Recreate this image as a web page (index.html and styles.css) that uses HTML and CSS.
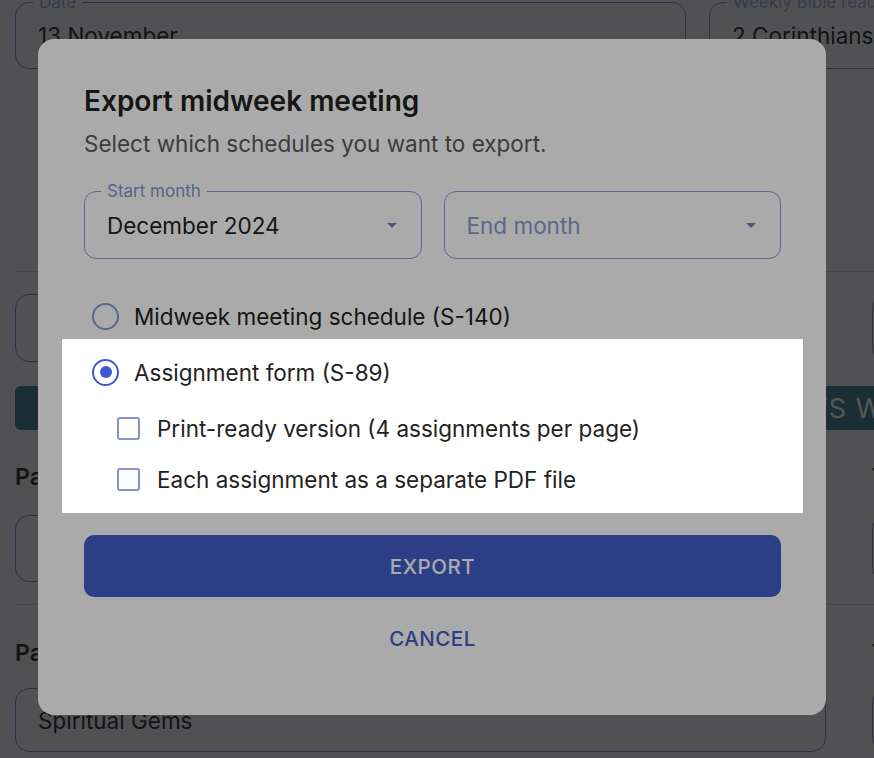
FILE: index.html
```html
<!DOCTYPE html>
<html lang="en">
<head>
<meta charset="utf-8">
<title>Export midweek meeting</title>
<link rel="stylesheet" href="styles.css">
</head>
<body>
<div class="page">
  <div class="row row-top">
    <div class="field"><span class="field-label">Date</span><span class="field-value">13 November</span></div>
    <div class="field"><span class="field-label">Weekly Bible reading</span><span class="field-value">2 Corinthians 10-13</span></div>
  </div>
  <hr class="divider divider-1">
  <div class="row row-wide row-2">
    <div class="field"></div>
    <div class="field"></div>
  </div>
  <div class="section-bar"><span class="section-title">TREASURES FROM GOD’S WORD</span></div>
  <div class="row row-wide heading-row">
    <h3 class="part">Part 1</h3>
    <h3 class="part">Time</h3>
  </div>
  <div class="row row-wide row-3">
    <div class="field"></div>
    <div class="field"></div>
  </div>
  <hr class="divider divider-2">
  <div class="row row-wide heading-row heading-row-2">
    <h3 class="part">Part 2</h3>
    <h3 class="part">Time</h3>
  </div>
  <div class="row row-wide row-4">
    <div class="field field-short"><span class="field-value">Spiritual Gems</span></div>
    <div class="field field-short"></div>
  </div>
</div>

<div class="backdrop"></div>

<div class="dialog" role="dialog">
  <h2 class="dialog-title">Export midweek meeting</h2>
  <p class="dialog-sub">Select which schedules you want to export.</p>

  <div class="selects">
    <div class="select">
      <span class="select-label">Start month</span>
      <span class="select-value">December 2024</span>
      <span class="arrow"></span>
    </div>
    <div class="select">
      <span class="select-value placeholder">End month</span>
      <span class="arrow"></span>
    </div>
  </div>

  <div class="option">
    <span class="radio"></span>
    <span class="option-text">Midweek meeting schedule (S-140)</span>
  </div>

  <div class="highlight">
    <div class="option">
      <span class="radio checked"><span class="dot"></span></span>
      <span class="option-text">Assignment form (S-89)</span>
    </div>
    <div class="option sub sub-1">
      <span class="checkbox"></span>
      <span class="option-text">Print-ready version (4 assignments per page)</span>
    </div>
    <div class="option sub sub-2">
      <span class="checkbox"></span>
      <span class="option-text">Each assignment as a separate PDF file</span>
    </div>
  </div>

  <button class="btn btn-primary">Export</button>
  <button class="btn btn-text">Cancel</button>
</div>
</body>
</html>
```

FILE: styles.css
```css
* { box-sizing: border-box; }

html, body {
  margin: 0;
  width: 874px;
  height: 758px;
  overflow: hidden;
}

body {
  background: #f4f4f8;
  font-family: Inter, "Noto Sans", sans-serif;
  color: #222;
}

/* ---------- background page ---------- */
.page {
  width: 1400px;
  padding: 2px 0 0 15px;
}

.row {
  display: grid;
}

.row-top {
  grid-template-columns: 671px 500px;
  gap: 23px;
}

.row-wide {
  grid-template-columns: 811px 400px;
  gap: 46px;
}

.field {
  position: relative;
  height: 67px;
  border: 1px solid #7f95e0;
  border-radius: 14px;
  display: flex;
  align-items: center;
  padding-left: 22px;
  font-size: 22.5px;
  color: #3a3a44;
}

.field-short { height: 64px; }

.field-label {
  position: absolute;
  top: -12px;
  left: 17px;
  padding: 0 6px;
  font-size: 17px;
  line-height: 22px;
  background: #f4f4f8;
  color: #a2b2e6;
}

.divider {
  border: 0;
  height: 1px;
  margin: 0;
  background: #d4d6e2;
}

.divider-1 { margin-top: 202px; }
.row-2 { margin-top: 22px; }
.row-2 .field { height: 68px; }

.section-bar {
  margin-top: 24px;
  height: 44px;
  border-radius: 6px;
  background: #518a9f;
  display: flex;
  align-items: center;
  padding-left: 476px;
}

.section-title {
  color: #ffffff;
  font-size: 27px;
  letter-spacing: 1px;
  white-space: nowrap;
}

.heading-row { margin-top: 32px; }

.part {
  margin: 0;
  font-size: 23px;
  line-height: 30px;
  font-weight: 600;
  color: #3a3a44;
}

.row-3 { margin-top: 23px; }
.divider-2 { margin-top: 22px; }
.heading-row-2 { margin-top: 33px; }
.row-4 { margin-top: 20px; }

/* ---------- modal ---------- */
.backdrop {
  position: fixed;
  inset: 0;
  background: rgba(0, 0, 0, 0.5);
}

.dialog {
  position: fixed;
  left: 38px;
  top: 39px;
  width: 788px;
  padding: 46px 45px 55px 46px;
  background: #ffffff;
  border-radius: 16px;
  display: flex;
  flex-direction: column;
}

.dialog-title {
  margin: 0;
  font-size: 28px;
  line-height: 32px;
  font-weight: 600;
  color: #222;
}

.dialog-sub {
  margin: 13px 0 0;
  font-size: 22.5px;
  line-height: 28px;
  color: #5b5b5b;
}

.selects {
  margin-top: 33px;
  display: grid;
  grid-template-columns: 1fr 1fr;
  gap: 22px;
}

.select {
  position: relative;
  height: 68px;
  border: 1px solid #879cd2;
  border-radius: 12px;
  display: flex;
  align-items: center;
  justify-content: space-between;
  padding: 0 24px 0 22px;
}

.select-label {
  position: absolute;
  top: -12px;
  left: 16px;
  padding: 0 6px;
  font-size: 17px;
  line-height: 22px;
  color: #8196d0;
  background: #ffffff;
}

.select-value {
  font-size: 22.5px;
  color: #222;
}

.select-value.placeholder { color: #879cd2; }

.arrow {
  width: 0;
  height: 0;
  border-left: 5px solid transparent;
  border-right: 5px solid transparent;
  border-top: 5px solid #7084c4;
}

.option {
  display: flex;
  align-items: center;
  height: 40px;
  margin-top: 37px;
}

.option-text {
  font-size: 22.5px;
  color: #222;
}

.radio {
  width: 27px;
  height: 27px;
  border: 2.5px solid #8a9bd4;
  border-radius: 50%;
  margin-left: 8px;
  margin-right: 15px;
  display: flex;
  align-items: center;
  justify-content: center;
  flex-shrink: 0;
}

.radio.checked { border-color: #3d5ad0; }

.dot {
  width: 12px;
  height: 12px;
  border-radius: 50%;
  background: #3d5ad0;
}

.highlight {
  position: relative;
  z-index: 1;
  margin: 3px -22px 0;
  padding: 13px 22px 14px;
  background: #ffffff;
  box-shadow: 0 0 0 3000px rgba(0, 0, 0, 0.333);
}

.highlight .option:first-child { margin-top: 0; }
.option.sub-1 { margin-top: 16px; }
.option.sub-2 { margin-top: 11px; }

.checkbox {
  width: 23px;
  height: 23px;
  border: 2px solid #8493c9;
  border-radius: 3px;
  margin-left: 33px;
  margin-right: 17px;
  flex-shrink: 0;
}

.btn {
  font: inherit;
  border: 0;
  text-transform: uppercase;
  font-size: 20.5px;
  font-weight: 500;
  letter-spacing: 0.5px;
  cursor: pointer;
}

.btn-primary {
  margin-top: 22px;
  height: 62px;
  border-radius: 10px;
  background: #425dc8;
  color: #ffffff;
}

.btn-text {
  margin-top: 19px;
  height: 44px;
  background: transparent;
  color: #425dc8;
}
```
